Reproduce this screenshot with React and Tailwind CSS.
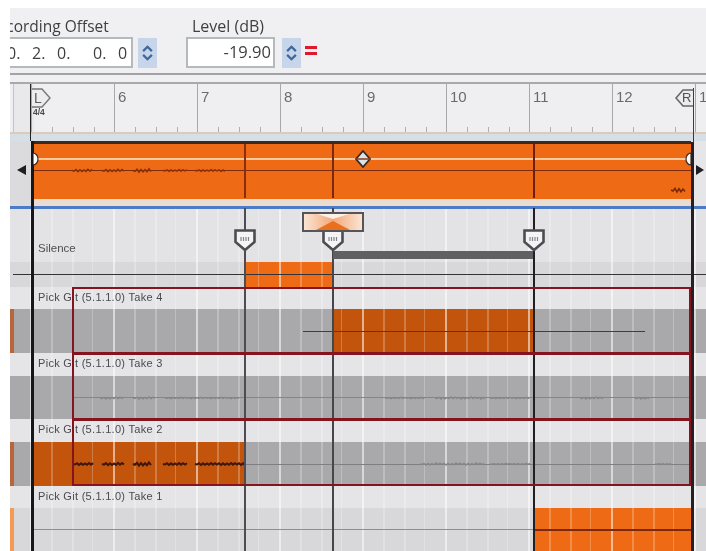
const GRID = "absolute inset-0 bg-[repeating-linear-gradient(90deg,transparent_0,transparent_20px,rgba(255,255,255,0.55)_20px,rgba(255,255,255,0.55)_22px,transparent_22px,transparent_41px,rgba(255,255,255,0.24)_41px,rgba(255,255,255,0.24)_43px,transparent_43px,transparent_62px,rgba(255,255,255,0.24)_62px,rgba(255,255,255,0.24)_64px,transparent_64px,transparent_82px,rgba(255,255,255,0.24)_82px,rgba(255,255,255,0.24)_83px)]";

function Spinner() {
  return (
    <div className="w-[19px] h-[30px] mt-[1px] bg-[#c6d5ea] flex flex-col items-center justify-center gap-[2px]">
      <svg width="11" height="7" viewBox="0 0 12 8"><path d="M1 7 L6 2 L11 7" fill="none" stroke="#41669c" strokeWidth="2.6" /></svg>
      <svg width="11" height="7" viewBox="0 0 12 8"><path d="M1 1 L6 6 L11 1" fill="none" stroke="#41669c" strokeWidth="2.6" /></svg>
    </div>
  );
}

function Toolbar() {
  return (
    <div className="h-[64px] bg-[#f0eff1] flex pt-[8px] text-[#3f3f42] font-['Open_Sans','Liberation_Sans',sans-serif]">
      <div className="w-[123px] overflow-hidden">
        <div className="h-[21px] -ml-[22px] text-[15.5px] leading-[20px] whitespace-nowrap">Recording Offset</div>
        <div className="h-[31px] bg-white border-y-2 border-r-2 border-[#b4b9be] flex justify-end items-center pr-[3px] text-[16px] overflow-hidden">
          <span className="w-[25px] shrink-0">0.</span>
          <span className="w-[25px] shrink-0">2.</span>
          <span className="w-[36px] shrink-0">0.</span>
          <span className="w-[25px] shrink-0">0.</span>
          <span className="w-[10px] shrink-0">0</span>
        </div>
      </div>
      <div className="ml-[5px] mt-[21px]"><Spinner /></div>
      <div className="ml-[29px] w-[89px]">
        <div className="h-[21px] pl-[6px] text-[16px] leading-[20px] whitespace-nowrap">Level (dB)</div>
        <div className="h-[31px] bg-white border-2 border-[#b4b9be] flex justify-end items-center pr-[2px] text-[16.5px]">-19.90</div>
      </div>
      <div className="ml-[7px] mt-[21px]"><Spinner /></div>
      <div className="ml-[4px] mt-[30px] w-[12px] h-[9px] flex flex-col justify-between">
        <div className="h-[3px] bg-[#e0182c]" />
        <div className="h-[3px] bg-[#e0182c]" />
      </div>
    </div>
  );
}

function Separator() {
  return (
    <div className="h-[12px] bg-[#f0eff1] flex flex-col pt-[1px]">
      <div className="h-[2px] bg-[#a3a3a5]" />
      <div className="h-[7px]" />
      <div className="h-[2px] bg-[#a9a9ab]" />
    </div>
  );
}

function Ruler() {
  const cells = ["", "6", "7", "8", "9", "10", "11", "12", "1"];
  return (
    <div className="h-[50px] flex bg-[#efeef1] border-b-2 border-[#dccbbb] font-['Liberation_Sans',sans-serif] text-[#6b6b6e] overflow-hidden">
      <div className="w-[21px] shrink-0 bg-[#e9e9eb] ml-[3px] -mr-[3px] border-l border-[#c4c4c6]" />
      {cells.map((n, i) => (
        <div key={i} className="w-[83px] shrink-0 border-l border-[#a8a8aa] flex flex-col pl-[3px]">
          <div className="h-[20px] mt-[3px] text-[15px] leading-[20px]">{n}</div>
          <div className="mt-auto flex pl-[17px] gap-[20px]">
            <div className="w-px h-[5px] bg-[#b0aeae]" />
            <div className="w-px h-[5px] bg-[#b0aeae]" />
            <div className="w-px h-[5px] bg-[#b0aeae]" />
          </div>
        </div>
      ))}
    </div>
  );
}

function wavePath(segs, y) {
  let d = "";
  segs.forEach(([a, b, amp]) => {
    d += `M${a} ${y}`;
    for (let x = a + 2, k = 0; x <= b; x += 2, k++) {
      d += `L${x} ${y + (k % 2 ? -amp : amp) * (0.5 + ((k * 7) % 5) / 8)}`;
    }
  });
  return d;
}

function Wave({ segs, y, color, width = 1.2 }) {
  return (
    <svg className="absolute inset-0 w-full h-full" viewBox="0 0 706 551">
      <path d={wavePath(segs, y)} fill="none" stroke={color} strokeWidth={width} />
    </svg>
  );
}

function Overview() {
  return (
    <div className="h-[65px] flex bg-[#e9e9eb]">
      <div className="w-[23px] bg-[#dbdbde] flex items-start pt-[24px] pl-[7px]">
        <div className="w-0 h-0 border-y-[5px] border-y-transparent border-r-[9px] border-r-[#1f1f22]" />
      </div>
      <div className="w-[658px] flex flex-col">
        <div className="h-[3px] bg-[#3c2a22]" />
        <div className="h-[55px] bg-[#ee6a14] flex flex-col pt-[14px]">
          <div className="h-[2px] bg-[#f9c9a0]" />
          <div className="h-px mt-[10px] bg-[#7c2a0c]" />
        </div>
        <div className="h-[7px] bg-[#eadcd0]" />
      </div>
      <div className="flex-1 bg-[#e6e6e9] flex items-start pt-[24px] pl-[5px]">
        <div className="w-0 h-0 border-y-[5px] border-y-transparent border-l-[8px] border-l-[#1f1f22]" />
      </div>
    </div>
  );
}

function SilenceLanes() {
  return (
    <>
      <div className="h-[53px] relative bg-[#e3e3e6] pl-[28px] pt-[32px]">
        <div className={GRID} />
        <div className="relative text-[11.5px] leading-[14px] text-[#4f4f53] font-['Liberation_Sans',sans-serif]">Silence</div>
      </div>
      <div className="h-[25px] relative bg-[#d8d8db]">
        <div className="absolute inset-0 flex pl-[235px]">
          <div className="w-[87px] bg-[#ee6a14]" />
        </div>
        <div className={GRID} />
        <div className="absolute inset-0 pl-[3px] pt-[12px]">
          <div className="h-px bg-[#333336]" />
        </div>
      </div>
    </>
  );
}

function Take({ label, labelH, bodyH, stripe, offset, clip, bodyBg = "bg-[#a9a9ac]", children }) {
  return (
    <>
      <div className={`${labelH} relative bg-[#e5e5e8] pl-[28px] pt-[3px]`}>
        <div className={GRID} />
        <div className="relative text-[11px] leading-[14px] tracking-[0.3px] text-[#4b4b4f] whitespace-nowrap font-['Liberation_Sans',sans-serif]">{label}</div>
      </div>
      <div className={`${bodyH} relative ${bodyBg}`}>
        <div className="absolute inset-0 flex">
          <div className={`w-[4px] ${stripe}`} />
          <div className={offset} />
          <div className={clip} />
        </div>
        <div className={GRID} />
        <div className="absolute inset-0 flex items-center">{children}</div>
      </div>
    </>
  );
}

function Shield({ className }) {
  return (
    <svg className={className} width="24" height="23" viewBox="0 0 24 23">
      <path d="M2.5 1.5 H21.5 V13 L12 21 L2.5 13 Z" fill="#f4f4f6" stroke="#4c4c52" strokeWidth="2.6" />
      <path d="M8 8v4M10.5 8v4M13 8v4M15.5 8v4" stroke="#85858a" strokeWidth="1.2" />
    </svg>
  );
}

export default function App() {
  return (
    <div className="relative w-[706px] h-[551px] bg-white pl-[10px] pt-[8px] overflow-hidden blur-[0.7px]">
      <Toolbar />
      <Separator />
      <Ruler />
      <div className="h-[7px] bg-[#d6dfe6]" />
      <Overview />
      <div className="h-[3px] bg-[#4c7cc8]" />
      <SilenceLanes />
      <Take label="Pick Git (5.1.1.0) Take 4" labelH="h-[22px]" bodyH="h-[44px]"
        stripe="bg-[#b9653a]" offset="w-[318px]" clip="w-[201px] bg-[#c2540b]">
        <div className="ml-[293px] w-[342px] h-px bg-[#4d3a34]" />
      </Take>
      <Take label="Pick Git (5.1.1.0) Take 3" labelH="h-[23px]" bodyH="h-[43px]"
        stripe="" offset="" clip="">
        <div className="ml-[64px] w-[616px] h-px bg-[#858589]" />
      </Take>
      <Take label="Pick Git (5.1.1.0) Take 2" labelH="h-[23px]" bodyH="h-[44px]"
        stripe="bg-[#b9653a]" offset="w-[19px]" clip="w-[211px] bg-[#c2540b]">
        <div className="ml-[234px] w-[446px] h-px bg-[#7f7f83]" />
      </Take>
      <Take label="Pick Git (5.1.1.0) Take 1" labelH="h-[22px]" bodyH="h-[43px]" bodyBg="bg-[#d8d8db]"
        stripe="bg-[#f49a55]" offset="w-[519px]" clip="w-[158px] bg-[#ee6a14]">
        <div className="ml-[23px] w-[500px] h-px bg-[#8d8d92]" />
        <div className="w-[158px] h-[2px] bg-[#7a2a0c]" />
      </Take>

      <Wave y={170.5} color="#8a2f0c" width={1.6} segs={[[72, 93, 1.2], [102, 125, 1.2], [133, 152, 1.6], [163, 188, 0.8], [195, 225, 0.8]]} />
      <Wave y={190} color="#7a2a0c" width={1.6} segs={[[671, 685, 2]]} />
      <Wave y={398} color="#87878b" width={1.4} segs={[[100, 125, 1], [133, 155, 1], [165, 240, 0.6], [385, 425, 0.6], [435, 485, 1], [490, 530, 0.6], [580, 605, 1], [635, 650, 1]]} />
      <Wave y={464} color="#3e160a" width={2} segs={[[73, 93, 1], [102, 125, 1.2], [133, 152, 1.6], [163, 188, 1], [195, 245, 1]]} />
      <Wave y={464} color="#87878b" width={1.4} segs={[[420, 485, 1], [490, 530, 0.6], [655, 672, 0.6]]} />

      {/* playhead and locator lines */}
      <div className="absolute left-[30px] top-[84px] h-[57px] w-px bg-[#222]" />
      <div className="absolute left-[31px] top-[141px] bottom-0 w-[3px] bg-[#17171a]" />
      <div className="absolute left-[693px] top-[88px] h-[54px] w-px bg-[#3a3a40]" />
      <div className="absolute left-[691px] top-[142px] bottom-0 w-[3px] bg-[#262024]" />
      <div className="absolute left-[244px] top-[144px] h-[54px] w-[2px] bg-[#8a2d10]" />
      <div className="absolute left-[332px] top-[144px] h-[54px] w-[2px] bg-[#7a2a14]" />
      <div className="absolute left-[533px] top-[144px] h-[54px] w-[2px] bg-[#6e1f0c]" />
      <div className="absolute left-[244px] top-[208px] bottom-0 w-[2px] bg-[#4c4c52]" />
      <div className="absolute left-[332px] top-[208px] bottom-0 w-[2px] bg-[#45454b]" />
      <div className="absolute left-[533px] top-[208px] bottom-0 w-[2px] bg-[#202024]" />

      {/* take selection frames */}
      <div className="absolute left-[72px] top-[287px] w-[619px] flex flex-col">
        <div className="h-[67px] border-2 border-[#86141f]" />
        <div className="h-[67px] -mt-[1px] border-2 border-[#86141f]" />
        <div className="h-[67px] -mt-[1px] border-2 border-[#86141f]" />
      </div>

      {/* silence lane overlays */}
      <div className="absolute left-[333px] top-[251px] w-[200px] h-[8px] bg-[#5f5f64]" />
      <Shield className="absolute left-[233px] top-[229px]" />
      <Shield className="absolute left-[321px] top-[229px]" />
      <Shield className="absolute left-[522px] top-[229px]" />
      <svg className="absolute left-[302px] top-[212px]" width="62" height="20" viewBox="0 0 62 20">
        <defs>
          <linearGradient id="fade" x1="0" x2="1" y1="0" y2="0">
            <stop offset="0" stopColor="#fbe6d6" />
            <stop offset="0.5" stopColor="#f3a878" />
            <stop offset="1" stopColor="#fbe6d6" />
          </linearGradient>
        </defs>
        <rect x="1" y="1" width="60" height="18" fill="url(#fade)" stroke="#55555a" strokeWidth="2" />
        <path d="M14 18 L31 9 L48 18 Z" fill="#e8701f" />
        <path d="M15 2 H47 L31 7 Z" fill="#fdf0e6" />
      </svg>

      {/* envelope handles */}
      <svg className="absolute left-[355px] top-[150px]" width="16" height="18" viewBox="0 0 16 18">
        <path d="M8 1 L15 9 L8 17 L1 9 Z" fill="#d9e4ea" stroke="#3c2a22" strokeWidth="1.8" />
        <path d="M1 9 H15" stroke="#8a3a14" strokeWidth="1.5" />
      </svg>
      <svg className="absolute left-[33px] top-[152px]" width="6" height="14" viewBox="0 0 6 14">
        <path d="M0 1 A5 6 0 0 1 0 13 Z" fill="#fff" stroke="#3c2a22" strokeWidth="1.2" />
      </svg>
      <svg className="absolute left-[685px] top-[152px]" width="6" height="14" viewBox="0 0 6 14">
        <path d="M6 1 A5 6 0 0 0 6 13 Z" fill="#fff" stroke="#3c2a22" strokeWidth="1.2" />
      </svg>

      {/* locators */}
      <div className="absolute left-[31px] top-[88px] w-[20px] h-[20px] font-['Liberation_Sans',sans-serif]">
        <svg className="absolute inset-0" width="20" height="20" viewBox="0 0 20 20">
          <path d="M1 1 H11 L19 10 L11 19 H1" fill="#ecebee" stroke="#77777b" strokeWidth="1.4" />
        </svg>
        <span className="relative block pl-[3px] pt-[2px] text-[14px] leading-[16px] text-[#5c5c60]">L</span>
      </div>
      <div className="absolute left-[33px] top-[108px] text-[8.5px] leading-[9px] font-bold text-[#4a4a4e] font-['Liberation_Sans',sans-serif]">4/4</div>
      <div className="absolute left-[675px] top-[89px] w-[19px] h-[18px] font-['Liberation_Sans',sans-serif]">
        <svg className="absolute inset-0" width="19" height="18" viewBox="0 0 19 18">
          <path d="M18 1 H8 L1 9 L8 17 H18" fill="#ecebee" stroke="#66666a" strokeWidth="1.6" />
        </svg>
        <span className="relative block pl-[7px] pt-[1px] text-[13px] leading-[16px] text-[#505054]">R</span>
      </div>
    </div>
  );
}
